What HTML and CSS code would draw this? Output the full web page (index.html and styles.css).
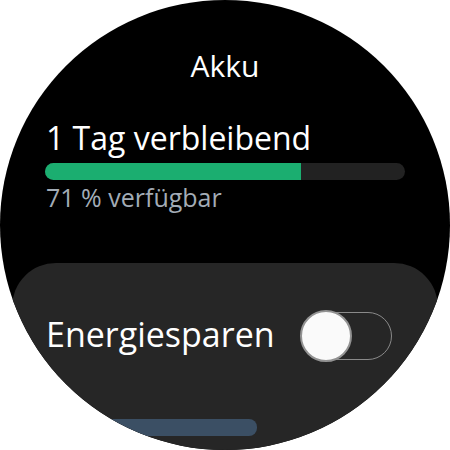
FILE: index.html
```html
<!DOCTYPE html>
<html>
<head>
<meta charset="utf-8">
<link rel="stylesheet" href="styles.css">
</head>
<body>
<div class="watch">
  <div class="title">Akku</div>
  <div class="status">
    <div class="remaining">1 Tag verbleibend</div>
    <div class="bar"><div class="fill" style="width:71%"></div></div>
    <div class="avail">71 % verfügbar</div>
  </div>
  <div class="card">
    <div class="row">
      <div class="label">Energiesparen</div>
      <div class="toggle"><div class="knob"></div></div>
    </div>
    <div class="btnrow"><div class="btn"></div></div>
  </div>
</div>
</body>
</html>
```
FILE: styles.css
```css
html, body {
  margin: 0;
  padding: 0;
  background: #fff;
}
.watch {
  width: 450px;
  height: 450px;
  border-radius: 50%;
  overflow: hidden;
  background: #000;
  display: flex;
  flex-direction: column;
  font-family: "Open Sans", "Noto Sans", sans-serif;
  color: #fff;
}
.title {
  margin-top: 49px;
  height: 34px;
  line-height: 34px;
  font-size: 30px;
  text-align: center;
}
.status {
  padding: 0 45px;
  margin-top: 37px;
}
.remaining {
  font-size: 32px;
  line-height: 36px;
  height: 36px;
  padding-left: 1px;
}
.bar {
  margin-top: 7px;
  height: 17px;
  border-radius: 9px;
  background: #222222;
  overflow: hidden;
}
.fill {
  height: 100%;
  background: #1bae70;
}
.avail {
  margin-top: 3px;
  font-size: 25px;
  line-height: 28px;
  height: 28px;
  color: #a3acb6;
  padding-left: 1px;
}
.card {
  margin: 52px 12px 0;
  flex: 1;
  background: #262626;
  border-radius: 44px 44px 0 0;
  display: flex;
  flex-direction: column;
}
.row {
  display: flex;
  align-items: flex-start;
  justify-content: space-between;
  padding: 45px 46px 0 34px;
}
.label {
  font-size: 34px;
  line-height: 52px;
  height: 52px;
}
.toggle {
  position: relative;
  margin-top: 4px;
  width: 89px;
  height: 46px;
  border: 1.5px solid #8a8a8a;
  border-radius: 26px;
}
.knob {
  position: absolute;
  left: -2.5px;
  top: -3.5px;
  width: 52px;
  height: 52px;
  border-radius: 50%;
  background: #fafafa;
  border: 2px solid #929292;
  box-sizing: border-box;
}
.btnrow {
  margin-top: 59px;
  padding-left: 80px;
}
.btn {
  width: 165px;
  height: 17px;
  border-radius: 8px;
  background: #3b4f64;
}
```
